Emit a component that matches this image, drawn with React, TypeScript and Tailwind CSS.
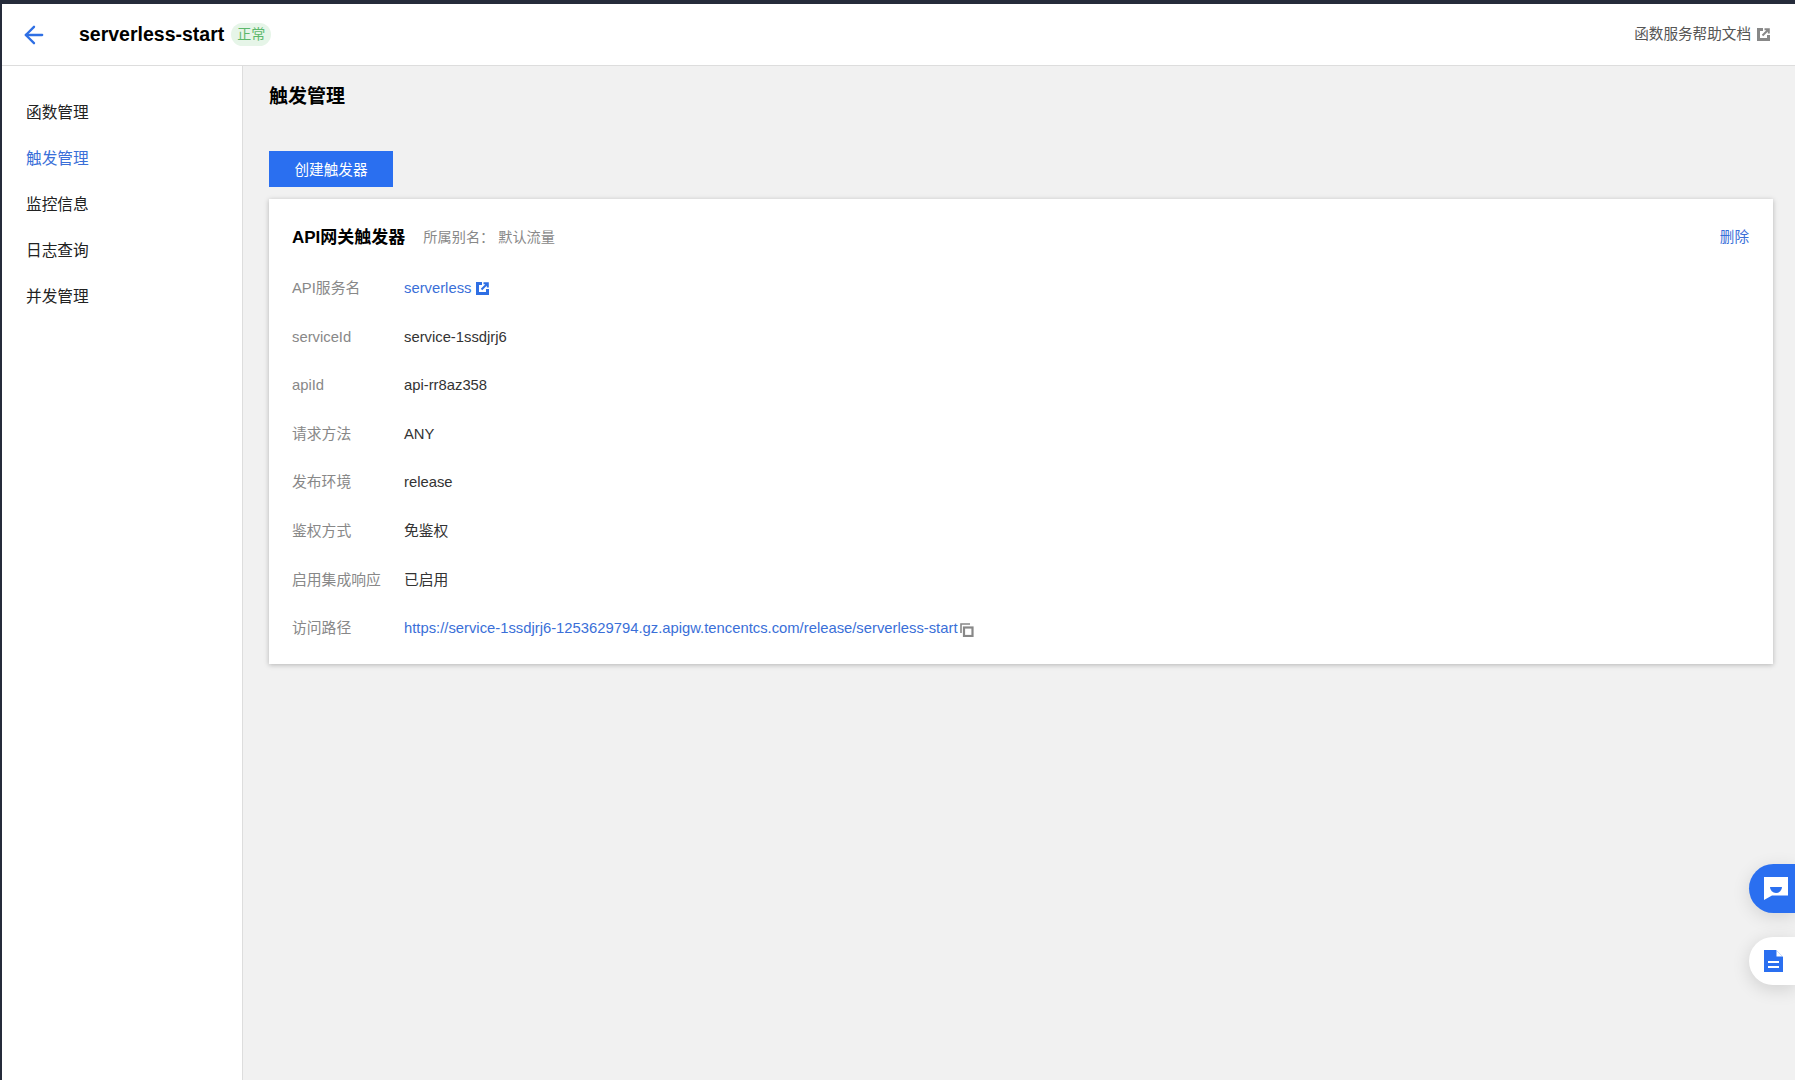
import { ArrowLeft } from "lucide-react";

const FONT = "font-['Liberation_Sans','Noto_Sans_CJK_SC',sans-serif]";

const NAV_ITEMS = ["函数管理", "触发管理", "监控信息", "日志查询", "并发管理"];

const ROWS = [
  { label: "serviceId", value: "service-1ssdjrj6" },
  { label: "apiId", value: "api-rr8az358" },
  { label: "请求方法", value: "ANY" },
  { label: "发布环境", value: "release" },
  { label: "鉴权方式", value: "免鉴权" },
  { label: "启用集成响应", value: "已启用" },
];

// solid square with the arrow knocked out, same glyph in header and card
function ExternalIcon({ className }: { className: string }) {
  return (
    <svg viewBox="0 0 13 13" className={className} fill="none" stroke="currentColor">
      <path d="M6 1.500H1.500v10h10V7" strokeWidth="3" />
      <path d="M5.500 7.500l5.500-5.500M7.500 1.200h4.300v4.300" strokeWidth="2" />
    </svg>
  );
}

function Row({ label, children }: { label: string; children: React.ReactNode }) {
  return (
    <div className="flex h-[48.57px] items-center text-[14.8px]">
      <div className="w-[112px] shrink-0 text-[#888888]">{label}</div>
      {children}
    </div>
  );
}

export default function App() {
  return (
    <div className={`${FONT} flex h-[1080px] flex-col overflow-hidden border-l-2 border-[#252b3a] bg-[#f1f1f1] text-[#333333]`}>
      <div className="h-[4px] shrink-0 bg-[#252b3a]" />

      {/* header */}
      <header className="flex h-[62px] shrink-0 items-center border-b border-[#dddddd] bg-white pl-[18px] pr-[25px]">
        <ArrowLeft className="h-[28px] w-[28px] text-[#2f6fe4]" strokeWidth={2} />
        <h1 className="ml-[31px] text-[19.5px] font-bold text-black">serverless-start</h1>
        <span className="ml-[7px] flex h-[23px] items-center rounded-full bg-[#e6f5e8] px-[6px] text-[14px] text-[#5cb86c]">正常</span>
        <div className="ml-auto flex items-center gap-[6px] text-[14.6px] text-[#555555]">
          函数服务帮助文档
          <ExternalIcon className="h-[13px] w-[13px] text-[#888888]" />
        </div>
      </header>

      <div className="flex min-h-0 flex-1">
        {/* sidebar */}
        <nav className="flex w-[241px] shrink-0 flex-col border-r border-[#dddddd] bg-white pl-[24px] pt-[24px]">
          {NAV_ITEMS.map((item) => (
            <div key={item} className={`flex h-[46px] items-center text-[15.7px] ${item === "触发管理" ? "text-[#3a6fd8]" : "text-[#222222]"}`}>
              {item}
            </div>
          ))}
        </nav>

        {/* main */}
        <main className="flex-1 pl-[26px] pr-[22px] pt-[18px]">
          <h2 className="text-[19px] font-bold leading-[26px] text-black">触发管理</h2>
          <button className="mt-[41px] flex h-[36px] w-[124px] items-center justify-center bg-[#2a6ff0] pt-[3px] text-[14.6px] text-white">创建触发器</button>

          <section className="mt-[12px] h-[465px] bg-white pl-[23px] pr-[24px] pt-[24px] shadow-[0_1px_5px_rgba(0,0,0,0.25)]">
            <div className="flex h-[30px] items-center">
              <span className="text-[17px] font-bold text-black">API网关触发器</span>
              <span className="ml-[18px] text-[14.2px] text-[#888888]">所属别名： 默认流量</span>
              <span className="ml-auto text-[14.6px] text-[#3a6fd8]">删除</span>
            </div>

            <div className="mt-[11px]">
              <Row label="API服务名">
                <span className="text-[#3a6fd8]">serverless</span>
                <ExternalIcon className="ml-[5px] h-[13px] w-[13px] text-[#2f6fe4]" />
              </Row>
              {ROWS.map((row) => (
                <Row key={row.label} label={row.label}>
                  <span className="text-[#333333]">{row.value}</span>
                </Row>
              ))}
              <Row label="访问路径">
                <span className="text-[#3a6fd8]">https://service-1ssdjrj6-1253629794.gz.apigw.tencentcs.com/release/serverless-start</span>
                <svg viewBox="0 0 14 14" className="ml-[2px] mt-[3px] h-[14px] w-[14px] text-[#888888]" fill="none" stroke="currentColor" strokeWidth="1.6">
                  <path d="M1 10V1h9" />
                  <rect x="4" y="4.500" width="8.500" height="8.500" strokeWidth="2.2" />
                </svg>
              </Row>
            </div>
          </section>
        </main>
      </div>

      {/* floating buttons */}
      <div className="absolute bottom-[167px] right-0 flex h-[49px] w-[46px] items-center rounded-l-full bg-[#2a6ff0] pl-[15px] shadow-[0_4px_18px_rgba(0,0,0,0.12)]">
        <svg viewBox="0 0 24 23" className="h-[23px] w-[24px]">
          <path d="M0 0h24v18.500H8L0 23z" fill="#ffffff" />
          <path d="M6 10h12a6 6 0 0 1-12 0z" fill="#2a6ff0" />
        </svg>
      </div>
      <div className="absolute bottom-[95px] right-0 flex h-[48px] w-[46px] items-center rounded-l-full bg-white pl-[15px] shadow-[0_4px_18px_rgba(0,0,0,0.14)]">
        <svg viewBox="0 0 19 22" className="h-[22px] w-[19px]">
          <path d="M0 0h12l7 7v15H0z" fill="#2a6ff0" />
          <path d="M12.500 0.500v6h6z" fill="#ffffff" />
          <path d="M4 11h11v2H4zM4 16h11v2H4z" fill="#ffffff" />
        </svg>
      </div>
    </div>
  );
}
